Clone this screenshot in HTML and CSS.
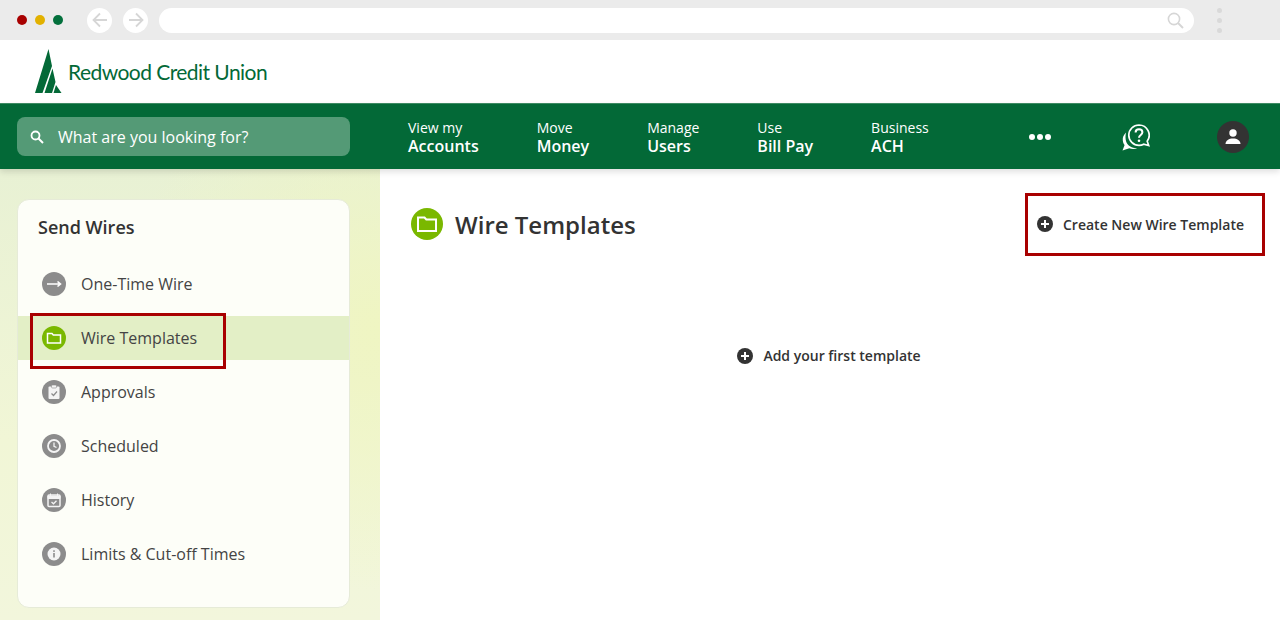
FILE: index.html
```html
<!DOCTYPE html>
<html lang="en">
<head>
    <meta charset="UTF-8">
    <title>Wire Templates</title>
    <link rel="stylesheet" href="styles.css">
</head>
<body>
    <!-- Browser chrome -->
    <div class="browser-bar">
        <div class="dots">
            <span class="dot dot-red"></span>
            <span class="dot dot-yellow"></span>
            <span class="dot dot-green"></span>
        </div>
        <div class="round-btn">
            <svg width="18" height="18" viewBox="0 0 18 18"><path d="M16 9H2.5M9 2.5L2.5 9L9 15.5" fill="none" stroke="#d6d6d6" stroke-width="1.8"/></svg>
        </div>
        <div class="round-btn">
            <svg width="18" height="18" viewBox="0 0 18 18"><path d="M2 9h13.5M9 2.5L15.5 9L9 15.5" fill="none" stroke="#d6d6d6" stroke-width="1.8"/></svg>
        </div>
        <div class="address">
            <svg width="17" height="17" viewBox="0 0 17 17"><circle cx="7" cy="7" r="5.6" fill="none" stroke="#d6d6d6" stroke-width="1.6"/><path d="M11 11l5 5" stroke="#d6d6d6" stroke-width="2"/></svg>
        </div>
        <div class="kebab"><span></span><span></span><span></span></div>
    </div>

    <!-- Logo -->
    <header class="logo-bar">
        <svg class="logo-mark" width="27" height="45" viewBox="0 0 27 45">
            <path fill="#036937" d="M13.5 0L17 17L7.5 44H0zM17.5 19.500L20.500 33L17 44H9.500zM21 36L26.500 44H18.500z"/>
        </svg>
        <span class="logo-text">Redwood Credit Union</span>
    </header>

    <!-- Main nav -->
    <nav class="main-nav">
        <div class="search">
            <svg width="14" height="14" viewBox="0 0 14 14"><circle cx="5.500" cy="5.500" r="4" fill="none" stroke="#fff" stroke-width="1.800"/><path d="M8.500 8.500L13 13" stroke="#fff" stroke-width="2"/></svg>
            <span>What are you looking for?</span>
        </div>
        <div class="nav-links">
            <a class="nav-link"><span>View my</span><b>Accounts</b></a>
            <a class="nav-link"><span>Move</span><b>Money</b></a>
            <a class="nav-link"><span>Manage</span><b>Users</b></a>
            <a class="nav-link"><span>Use</span><b>Bill Pay</b></a>
            <a class="nav-link"><span>Business</span><b>ACH</b></a>
        </div>
        <div class="more"><span></span><span></span><span></span></div>
        <svg class="help" width="28" height="28" viewBox="0 0 28 28">
            <path fill="#fff" d="M4 9.500C1.500 12 .5 14.500 .8 17.500c.2 2 1 3.500 1.800 4.500L.5 27.500l6.800-2.200c2.500 1 5.500 1 8-.2-5 .2-9-1.500-11-6-1-3-1-6.500-.3-9.600z"/>
            <path fill="none" stroke="#fff" stroke-width="1.700" d="M17 2a10.200 10.200 0 0 0 0 20.400c1.700 0 3.300-.4 4.700-1.200l5 1.300-1.500-4.300A10.200 10.200 0 0 0 17 2z"/>
            <path fill="none" stroke="#fff" stroke-width="2" d="M13.600 9.500c0-2 1.500-3.200 3.400-3.200s3.400 1.200 3.400 3c0 2.600-3.400 2.700-3.400 5.400"/>
            <circle cx="17" cy="17.800" r="1.300" fill="#fff"/>
        </svg>
        <div class="avatar">
            <svg width="16" height="16" viewBox="0 0 16 16"><circle cx="8" cy="4" r="3.700" fill="#fff"/><path fill="#fff" d="M.500 15c0-3.500 3.500-5.500 7.500-5.500s7.500 2 7.500 5.500z"/></svg>
        </div>
    </nav>

    <div class="page">
        <!-- Sidebar -->
        <aside class="sidebar">
            <div class="card">
                <h2 class="card-title">Send Wires</h2>
                <ul class="side-menu">
                    <li class="side-item">
                        <span class="side-icon">
                            <svg width="16" height="16" viewBox="0 0 16 16"><path d="M1 8h13M11.500 5.500L14.500 8l-3 2.500" fill="none" stroke="#fff" stroke-width="1.600"/></svg>
                        </span>
                        One-Time Wire
                    </li>
                    <li class="side-item active">
                        <span class="side-icon">
                            <svg width="16" height="16" viewBox="0 0 16 16"><path d="M1.500 3.500h4.500l1.300 1.500h7.200v8h-13z" fill="none" stroke="#fff" stroke-width="1.500"/></svg>
                        </span>
                        Wire Templates
                    </li>
                    <li class="side-item">
                        <span class="side-icon">
                            <svg width="16" height="16" viewBox="0 0 16 16"><rect x="2.500" y="2.500" width="11" height="12.500" rx="1" fill="#f4f4f4"/><rect x="5.500" y="1" width="5" height="3" rx="1" fill="#f4f4f4" stroke="#8c8c8c" stroke-width=".6"/><path d="M5.500 9.500l2 2 3.500-4" fill="none" stroke="#8c8c8c" stroke-width="1.200"/></svg>
                        </span>
                        Approvals
                    </li>
                    <li class="side-item">
                        <span class="side-icon">
                            <svg width="16" height="16" viewBox="0 0 16 16"><circle cx="8" cy="8" r="6" fill="none" stroke="#f4f4f4" stroke-width="1.800"/><path d="M8 4.500V8.300l2.500 1.200" fill="none" stroke="#f4f4f4" stroke-width="1.300"/></svg>
                        </span>
                        Scheduled
                    </li>
                    <li class="side-item">
                        <span class="side-icon">
                            <svg width="16" height="16" viewBox="0 0 16 16"><rect x="2" y="3" width="12" height="11.500" rx="1" fill="none" stroke="#f4f4f4" stroke-width="1.500"/><path d="M2 4h12v2.500H2zM4.500 1.500v2.500M11.500 1.500v2.500" fill="#f4f4f4" stroke="#f4f4f4"/><path d="M5.500 10l2 1.800 3-3" fill="none" stroke="#f4f4f4" stroke-width="1.300"/></svg>
                        </span>
                        History
                    </li>
                    <li class="side-item">
                        <span class="side-icon">
                            <svg width="16" height="16" viewBox="0 0 16 16"><circle cx="8" cy="8" r="6.500" fill="#f4f4f4"/><rect x="7.200" y="7" width="1.600" height="4.500" fill="#8c8c8c"/><rect x="7.200" y="4.300" width="1.600" height="1.600" fill="#8c8c8c"/></svg>
                        </span>
                        Limits &amp; Cut-off Times
                    </li>
                </ul>
            </div>
        </aside>

        <!-- Content -->
        <main class="content">
            <div class="content-head">
                <div class="page-title">
                    <span class="title-icon">
                        <svg width="22" height="22" viewBox="0 0 22 22"><path d="M2 4.500h6.500l1.800 2H20v11.500H2z" fill="none" stroke="#fff" stroke-width="2"/></svg>
                    </span>
                    <h1>Wire Templates</h1>
                </div>
                <a class="create-link">
                    <svg class="plus" width="16" height="16" viewBox="0 0 16 16"><circle cx="8" cy="8" r="8" fill="#333"/><path d="M8 4v8M4 8h8" stroke="#fff" stroke-width="2"/></svg>
                    Create New Wire Template
                </a>
            </div>
            <a class="add-first">
                <svg class="plus" width="16" height="16" viewBox="0 0 16 16"><circle cx="8" cy="8" r="8" fill="#333"/><path d="M8 4v8M4 8h8" stroke="#fff" stroke-width="2"/></svg>
                Add your first template
            </a>
        </main>
    </div>
</body>
</html>
```

FILE: styles.css
```css
* {
    box-sizing: border-box;
}

html, body {
    margin: 0;
    height: 620px;
    overflow: hidden;
}

body {
    font-family: "Open Sans", Arial, sans-serif;
    color: #333;
    background: #fff;
}

/* Browser chrome */
.browser-bar {
    height: 40px;
    background: #ebebeb;
    display: flex;
    align-items: center;
    padding: 0 0 0 17px;
}

.dots {
    display: flex;
    gap: 8px;
    margin-right: 24px;
}

.dot {
    width: 10px;
    height: 10px;
    border-radius: 50%;
}

.dot-red { background: #a80000; }
.dot-yellow { background: #e2b100; }
.dot-green { background: #03703c; }

.round-btn {
    width: 25px;
    height: 25px;
    border-radius: 50%;
    background: #fff;
    display: flex;
    align-items: center;
    justify-content: center;
    margin-right: 11px;
}

.address {
    width: 1035px;
    height: 25px;
    margin-left: 0;
    border-radius: 13px;
    background: #fff;
    display: flex;
    align-items: center;
    justify-content: flex-end;
    padding-right: 10px;
}

.kebab {
    margin-left: 23px;
    display: flex;
    flex-direction: column;
    gap: 5px;
}

.kebab span {
    width: 5px;
    height: 5px;
    border-radius: 50%;
    background: #d9d9d9;
}

/* Logo */
.logo-bar {
    height: 63px;
    background: #fff;
    display: flex;
    align-items: flex-start;
    padding: 9px 0 0 35px;
}

.logo-text {
    font-family: "Lato", sans-serif;
    font-size: 21px;
    letter-spacing: -0.55px;
    color: #036937;
    margin: 10px 0 0 6px;
    line-height: 26px;
}

/* Main nav */
.main-nav {
    height: 66px;
    background: #036937;
    border-top: 1px solid #3d8a62;
    display: flex;
    align-items: center;
    padding-left: 17px;
    color: #fff;
    position: relative;
    box-shadow: 0 3px 6px rgba(0,0,0,0.12);
}

.search {
    width: 333px;
    height: 39px;
    border-radius: 8px;
    background: #549a76;
    display: flex;
    align-items: center;
    padding-left: 13px;
    gap: 14px;
    font-size: 16px;
}

.nav-links {
    display: flex;
    gap: 58px;
    margin-left: 58px;
    width: 527px;
}

.nav-link {
    display: flex;
    flex-direction: column;
    font-size: 14px;
    line-height: 19px;
}

.nav-link b {
    font-size: 16px;
    font-weight: 600;
}

.more {
    display: flex;
    gap: 2px;
    margin-left: 94px;
}

.more span {
    width: 6px;
    height: 6px;
    border-radius: 50%;
    background: #fff;
}

.help {
    margin-left: 71px;
}

.avatar {
    width: 32px;
    height: 32px;
    border-radius: 50%;
    background: #333;
    display: flex;
    align-items: center;
    justify-content: center;
    margin-left: 67px;
}

/* Page */
.page {
    display: flex;
    height: 451px;
}

.sidebar {
    width: 380px;
    padding: 30px 30px 0 17px;
    background:
        radial-gradient(circle at 100% 35%, #eff5c2 0, rgba(239,245,194,0) 55%),
        linear-gradient(180deg, #e8f1d4 0, #f1f6d6 60%, #f2f6dc 100%);
}

.card {
    height: 409px;
    background: #fdfef8;
    border: 1px solid #e6ebd8;
    border-radius: 12px;
}

.card-title {
    margin: 0;
    padding: 14px 0 0 20px;
    font-size: 18px;
    line-height: 26px;
    font-weight: 600;
    color: #333;
}

.side-menu {
    list-style: none;
    margin: 22px 0 0;
    padding: 0;
}

.side-item {
    height: 44px;
    margin-bottom: 10px;
    display: flex;
    align-items: center;
    gap: 15px;
    padding-left: 24px;
    font-size: 16px;
    color: #444;
    position: relative;
}

.side-icon {
    width: 24px;
    height: 24px;
    border-radius: 50%;
    background: #8c8c8c;
    display: flex;
    align-items: center;
    justify-content: center;
}

.side-item.active {
    background: #e3efc6;
}

.side-item.active .side-icon {
    background: #7ab800;
}

/* red callout boxes */
.side-item.active::after {
    content: "";
    position: absolute;
    left: 12px;
    top: -3px;
    width: 190px;
    height: 50px;
    border: 3px solid #a80000;
}

.content {
    flex: 1;
    position: relative;
    padding: 0 30px 0 31px;
}

.content-head {
    display: flex;
    justify-content: space-between;
    align-items: center;
    height: 110px;
}

.page-title {
    display: flex;
    align-items: center;
    gap: 12px;
}

.title-icon {
    width: 32px;
    height: 32px;
    border-radius: 50%;
    background: #7ab800;
    display: flex;
    align-items: center;
    justify-content: center;
}

h1 {
    margin: 0;
    font-size: 24px;
    font-weight: 600;
    color: #333;
}

.create-link {
    display: flex;
    align-items: center;
    gap: 10px;
    height: 63px;
    width: 240px;
    padding-left: 9px;
    border: 3px solid #a80000;
    font-size: 14px;
    font-weight: 600;
    margin-right: -15px;
}

.add-first {
    display: flex;
    align-items: center;
    justify-content: center;
    gap: 10px;
    font-size: 14px;
    font-weight: 600;
    margin-top: 67px;
    padding-right: 3px;
}
```
